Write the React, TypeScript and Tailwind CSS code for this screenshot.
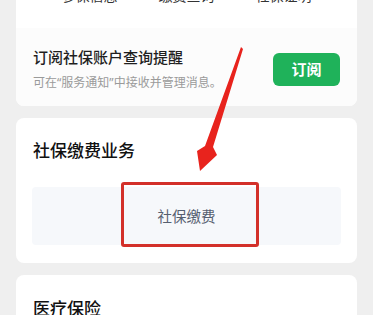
const font = { fontFamily: '"Noto Sans CJK SC", "Noto Sans", sans-serif' };
const latin = { fontFamily: '"Noto Sans", sans-serif' };

export default function App() {
  return (
    <div
      className="relative h-[315px] w-[373px] overflow-hidden bg-[#efefef] px-4"
      style={font}
    >
      <div className="-mt-[12px] flex flex-col gap-3">
        {/* Account card (top cut off) */}
        <div className="overflow-hidden rounded-lg bg-white">
          <div className="-mt-[3px] flex justify-around px-[25px] text-[14px] leading-[20px] text-[#333]">
            <span>参保信息</span>
            <span>缴费查询</span>
            <span>社保证明</span>
          </div>
          <div className="mt-[23px] flex items-center justify-between bg-[#fcfcfc] pb-[14px] pl-[17px] pr-[17px] pt-[18px]">
            <div className="flex shrink-0 flex-col whitespace-nowrap">
              <span className="text-[15px] font-medium leading-[22px] text-[#1f1f1f]">
                订阅社保账户查询提醒
              </span>
              <span className="mt-[5px] text-[12px] leading-[18px] text-[#9a9a9a]">
                可在<span style={latin}>“</span>服务通知<span style={latin}>”</span>中接收并管理消息。
              </span>
            </div>
            <button className="h-[33px] w-[67px] shrink-0 rounded-md bg-[#1fb25a] text-[15px] font-bold text-white">
              订阅
            </button>
          </div>
        </div>

        {/* Payment business */}
        <div className="rounded-lg bg-white pb-[18px] pt-[20px]">
          <h2 className="px-[17px] text-[17px] font-medium leading-[24px] text-[#111]">
            社保缴费业务
          </h2>
          <div className="relative mx-4 mt-[25px] flex h-[58px] items-center justify-center rounded bg-[#f6f8fb] text-[14.5px] text-[#566070]">
            社保缴费
            <div className="absolute -top-[5px] left-[89px] h-[65px] w-[138px] rounded-[3px] border-[3px] border-[#d3302a]" />
          </div>
        </div>

        {/* Medical insurance */}
        <div className="rounded-lg bg-white pb-4 pt-[21px]">
          <h2 className="px-[17px] text-[17px] font-medium leading-[24px] text-[#111]">
            医疗保险
          </h2>
        </div>
      </div>

      {/* Annotation arrow */}
      <svg
        className="pointer-events-none absolute left-0 top-0"
        width="373"
        height="315"
        viewBox="0 0 373 315"
      >
        <polygon
          points="241,47 243,49 213,147 217,155 200,171 197,151 205,146"
          fill="#e8231d"
        />
      </svg>
    </div>
  );
}
